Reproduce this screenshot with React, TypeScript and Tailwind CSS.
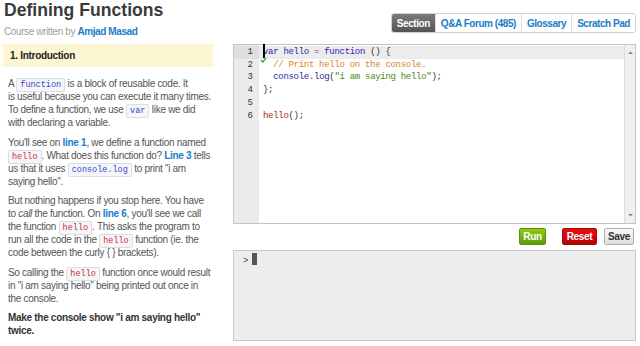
import React from 'react';

function Chip({ children, red }: { children: React.ReactNode; red?: boolean }) {
  return (
    <code
      className={
        "rounded-[2px] border border-[#dcdce4] bg-[#f6f6fa] px-[3px] py-[1px] font-['Liberation_Mono',monospace] text-[8.5px] leading-none tracking-normal " +
        (red ? 'text-[#c8322e]' : 'text-[#3247c8]')
      }
    >
      {children}
    </code>
  );
}

function Ref({ children }: { children: React.ReactNode }) {
  return <span className="font-bold text-[#1a7cc8]">{children}</span>;
}

const tabs = ['Section', 'Q&A Forum (485)', 'Glossary', 'Scratch Pad'];

const codeLines: React.ReactNode[] = [
  <>
    <span className="text-[#3420b0]">var</span> <span className="text-[#2a2aa0]">hello</span>{' '}
    <span className="text-[#7a3a8a]">=</span> <span className="text-[#3420b0]">function</span> () {'{'}
  </>,
  <>
    {'  '}
    <span className="text-[#de7f1c]">// Print hello on the console.</span>
  </>,
  <>
    {'  '}
    <span className="text-[#2a2aa0]">console</span>.<span className="text-[#2a2aa0]">log</span>(
    <span className="text-[#4b8a16]">"i am saying hello"</span>);
  </>,
  <>{'};'}</>,
  <>{' '}</>,
  <>
    <span className="text-[#b02424]">hello</span>();
  </>,
];

export default function App() {
  return (
    <div className="h-[346px] w-[640px] overflow-hidden bg-white font-['Liberation_Sans',Arial,sans-serif] text-[#555]">
      <div className="flex h-[44px] justify-between">
        <div className="pl-[4px]">
          <h1 className="text-[17.6px] leading-[20px] font-bold text-[#3a3a3a]">Defining Functions</h1>
          <p className="mt-[5px] text-[10px] leading-[13px] tracking-[-0.4px] text-[#a0a0a0]">
            Course written by <span className="font-bold text-[#1a7cc8]">Amjad Masad</span>
          </p>
        </div>
        <div className="mt-[13px] mr-[4px] flex h-[20px] overflow-hidden rounded-[3px] border border-[#d0d0d0] text-[10px] font-bold tracking-[-0.45px]">
          {tabs.map((t, i) => (
            <div
              key={t}
              className={
                i === 0
                  ? 'flex items-center bg-gradient-to-b from-[#7a7a7a] to-[#555] px-[5px] text-white'
                  : 'flex items-center border-l border-[#dcdcdc] bg-white px-[5px] text-[#1a7cc8]'
              }
            >
              {t}
            </div>
          ))}
        </div>
      </div>

      <div className="flex">
        <div className="ml-[3px] w-[210px] text-[10px] leading-[13px] tracking-[-0.3px]">
          <div className="flex h-[23px] items-center bg-[#fdf6d2] pl-[7px] font-bold text-[#222]">1. Introduction</div>
          <div className="px-[5px] pt-[10px] whitespace-nowrap">
            <p>
              A <Chip>function</Chip> is a block of reusable code. It
              <br />
              is useful because you can execute it many times.
              <br />
              To define a function, we use <Chip>var</Chip> like we did
              <br />
              with declaring a variable.
            </p>
            <p className="mt-[6.5px]">
              You'll see on <Ref>line 1</Ref>, we define a function named
              <br />
              <Chip red>hello</Chip>. What does this function do? <Ref>Line 3</Ref> tells
              <br />
              us that it uses <Chip>console.log</Chip> to print "i am
              <br />
              saying hello".
            </p>
            <p className="mt-[6.5px]">
              But nothing happens if you stop here. You have
              <br />
              to <em>call</em> the function. On <Ref>line 6</Ref>, you'll see we call
              <br />
              the function <Chip red>hello</Chip>. This asks the program to
              <br />
              run all the code in the <Chip red>hello</Chip> function (ie. the
              <br />
              code between the curly {'{ }'} brackets).
            </p>
            <p className="mt-[6.5px]">
              So calling the <Chip red>hello</Chip> function once would result
              <br />
              in "i am saying hello" being printed out once in
              <br />
              the console.
            </p>
            <p className="mt-[6.5px] font-bold text-[#333]">
              Make the console show "i am saying hello"
              <br />
              twice.
            </p>
          </div>
        </div>

        <div className="ml-[20px] w-[403px]">
          <div className="flex h-[180px] border border-[#c4c4c4] bg-white">
            <div className="w-[25px] bg-[#ebebeb] pt-[1px] text-right font-['Liberation_Mono',monospace] text-[9px] leading-[12.7px] text-[#333]">
              {codeLines.map((_, i) => (
                <div key={i} className={'pr-[6px] ' + (i === 0 ? 'bg-[#dedede]' : '')}>
                  {i + 1}
                </div>
              ))}
            </div>
            <div className="relative flex-1 pt-[1px] font-['Liberation_Mono',monospace] text-[9px] leading-[12.7px] tracking-[-0.3px] text-[#333]">
              {codeLines.map((line, i) => (
                <div key={i} className={'pl-[4px] whitespace-pre ' + (i === 0 ? 'bg-[#ececec]' : '')}>
                  {line}
                </div>
              ))}
              <div className="absolute top-[-1px] left-[4px] h-[14px] w-[1.5px] bg-black" />
              <svg className="absolute top-[12px] left-[1px]" width="7" height="6" viewBox="0 0 7 6">
                <path d="M1 3.2 L2.8 5 L6 1" fill="none" stroke="#3aa02a" strokeWidth="1.3" />
              </svg>
            </div>
            <div className="flex w-[11px] flex-col justify-between border-l border-[#dcdcdc] bg-[#f0f0f0] py-[5px]">
              <svg width="11" height="5" viewBox="0 0 11 5">
                <path d="M3 4 L5.5 1.5 L8 4 Z" fill="#888" />
              </svg>
              <svg width="11" height="5" viewBox="0 0 11 5">
                <path d="M3 1 L5.5 3.5 L8 1 Z" fill="#888" />
              </svg>
            </div>
          </div>

          <div className="mt-[4px] flex h-[17px] justify-end gap-[7px] pr-[2px] text-[10px] font-bold tracking-[-0.3px]">
            <button className="mr-[9px] w-[27px] rounded-[2px] border border-[#5a9208] bg-gradient-to-b from-[#8fcc12] to-[#5e9e06] text-white">
              Run
            </button>
            <button className="w-[35px] rounded-[2px] border border-[#a50808] bg-gradient-to-b from-[#e41010] to-[#b40404] text-white">
              Reset
            </button>
            <button className="w-[30px] rounded-[2px] border border-[#b0b0b0] bg-gradient-to-b from-[#fafafa] to-[#dedede] text-[#333]">
              Save
            </button>
          </div>

          <div className="mt-[5px] flex h-[91px] items-start gap-[4px] border border-[#c8c8c8] bg-[#ededed] pt-[2px] pl-[9px]">
            <span className="mt-[3px] font-['Liberation_Mono',monospace] text-[9px] leading-[10px] text-[#335]">&gt;</span>
            <span className="h-[12px] w-[5px] bg-[#555]" />
          </div>
        </div>
      </div>
    </div>
  );
}
